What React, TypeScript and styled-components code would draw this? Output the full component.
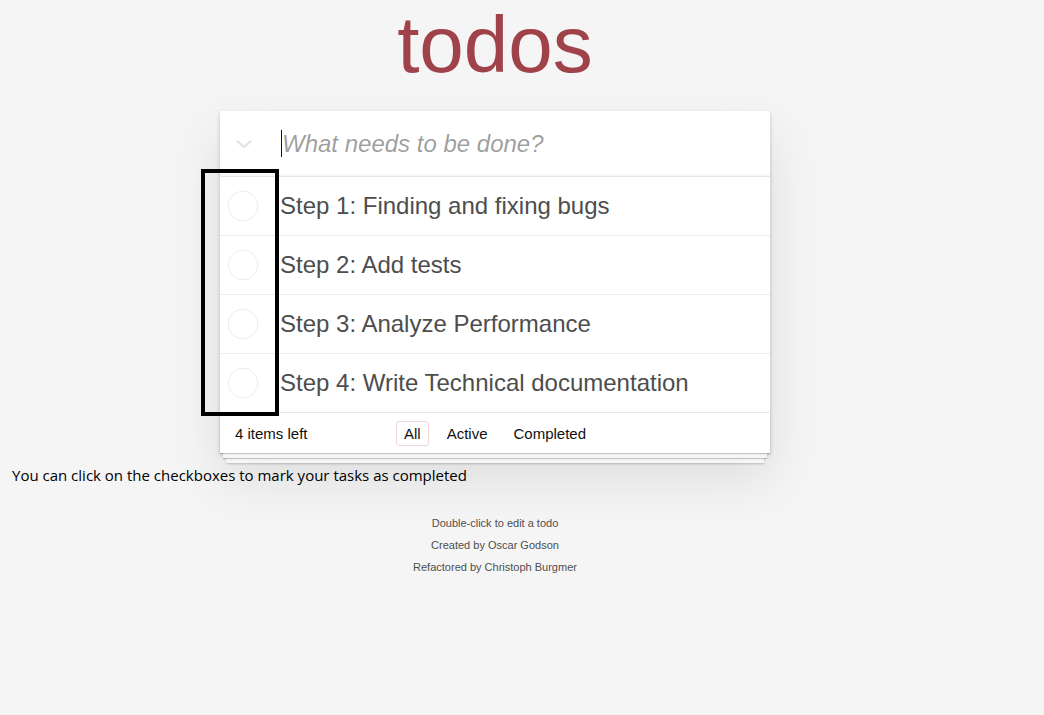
import React from "react";
import styled, { createGlobalStyle } from "styled-components";

const GlobalStyle = createGlobalStyle`
  html, body {
    margin: 0;
    padding: 0;
  }
  body {
    background: #f5f5f5;
    font-family: "Liberation Sans", Arial, Helvetica, sans-serif;
    color: #111;
    -webkit-font-smoothing: antialiased;
  }
`;

// Page shell
const Page = styled.div`
  width: 990px;
  padding-bottom: 40px;
`;

const Title = styled.h1`
  margin: 0;
  height: 90px;
  line-height: 90px;
  font-size: 80px;
  font-weight: 400;
  text-align: center;
  color: #a0424a;
  text-rendering: optimizeLegibility;
`;

const TodoApp = styled.section`
  position: relative;
  width: 550px;
  margin: 21px auto 0;
  background: #fff;
  box-shadow: 0 2px 4px 0 rgba(0, 0, 0, 0.2), 0 25px 50px 0 rgba(0, 0, 0, 0.1);
`;

// New todo row
const NewTodoRow = styled.header`
  display: flex;
  align-items: center;
  height: 65px;
  border-bottom: 1px solid #e6e6e6;
  box-shadow: inset 0 -2px 1px rgba(0, 0, 0, 0.03);
`;

const ToggleAll = styled.div`
  width: 48px;
  height: 100%;
  display: flex;
  align-items: center;
  justify-content: center;
`;

const InputWrap = styled.div`
  position: relative;
  flex: 1;
  padding-left: 12px;
`;

const NewTodoInput = styled.input`
  width: 100%;
  box-sizing: border-box;
  border: none;
  outline: none;
  padding: 0 0 0 2px;
  margin: 0;
  background: transparent;
  font-family: "Liberation Sans", Arial, sans-serif;
  font-size: 24px;
  line-height: 34px;
  color: #4d4d4d;

  &::placeholder {
    font-style: italic;
    color: rgba(0, 0, 0, 0.4);
  }
`;

const Caret = styled.span`
  position: absolute;
  left: 13px;
  top: 3px;
  width: 1px;
  height: 27px;
  background: #111;
`;

// Items
const TodoList = styled.ul`
  list-style: none;
  margin: 0;
  padding: 0;
`;

const TodoItem = styled.li`
  display: flex;
  align-items: center;
  height: 58px;
  border-bottom: 1px solid #ededed;

  &:last-child {
    border-bottom: none;
  }
`;

const Toggle = styled.div`
  width: 46px;
  display: flex;
  justify-content: center;
  margin-right: 14px;
`;

const Label = styled.label`
  font-size: 24px;
  line-height: 1.2;
  color: #4d4d4d;
  white-space: nowrap;
`;

// Footer
const Footer = styled.footer`
  display: grid;
  grid-template-columns: 1fr auto 1fr;
  align-items: center;
  height: 40px;
  padding: 0 15px;
  border-top: 1px solid #e6e6e6;
  font-size: 15px;
  color: #111;
  box-shadow: 0 1px 1px rgba(0, 0, 0, 0.2), 0 8px 0 -3px #f6f6f6,
    0 9px 1px -3px rgba(0, 0, 0, 0.2), 0 16px 0 -6px #f6f6f6,
    0 17px 2px -6px rgba(0, 0, 0, 0.2);
`;

const Count = styled.span`
  justify-self: start;
`;

const Filters = styled.ul`
  display: flex;
  gap: 10px;
  list-style: none;
  margin: 0;
  padding: 0;
`;

const FilterLink = styled.a<{ $selected?: boolean }>`
  display: block;
  padding: 3px 7px;
  border: 1px solid ${({ $selected }) => ($selected ? "rgba(175, 47, 47, 0.2)" : "transparent")};
  border-radius: 3px;
  line-height: 17px;
  color: inherit;
  text-decoration: none;
`;

// Tour highlight over the checkboxes
const Highlight = styled.div`
  position: absolute;
  left: -19px;
  top: 58px;
  width: 78px;
  height: 247px;
  box-sizing: border-box;
  border: 4px solid #000;
  pointer-events: none;
`;

const TourText = styled.p`
  margin: 13px 0 0;
  padding-left: 12px;
  font-family: "Open Sans", "Noto Sans", sans-serif;
  font-size: 15px;
  line-height: 19px;
  color: #000;
`;

const Info = styled.footer`
  display: flex;
  flex-direction: column;
  align-items: center;
  gap: 11px;
  margin-top: 33px;
  font-size: 11px;
  line-height: 1;
  color: #4d4d4d;
  text-shadow: 0 1px 0 rgba(255, 255, 255, 0.5);

  p {
    margin: 0;
  }
`;

const Chevron = () => (
  <svg width="18" height="10" viewBox="0 0 18 10">
    <polyline points="2,2 9,8 16,2" fill="none" stroke="#e3e3e3" strokeWidth="2.4" />
  </svg>
);

const Circle = () => (
  <svg width="32" height="32" viewBox="0 0 32 32">
    <circle cx="16" cy="16" r="14.8" fill="none" stroke="#ececec" strokeWidth="1" />
  </svg>
);

const todos = [
  "Step 1: Finding and fixing bugs",
  "Step 2: Add tests",
  "Step 3: Analyze Performance",
  "Step 4: Write Technical documentation",
];

const App: React.FC = () => {
  return (
    <>
      <GlobalStyle />
      <Page>
        <Title>todos</Title>
        <TodoApp>
          <NewTodoRow>
            <ToggleAll>
              <Chevron />
            </ToggleAll>
            <InputWrap>
              <NewTodoInput placeholder="What needs to be done?" readOnly />
              <Caret />
            </InputWrap>
          </NewTodoRow>
          <TodoList>
            {todos.map((t) => (
              <TodoItem key={t}>
                <Toggle>
                  <Circle />
                </Toggle>
                <Label>{t}</Label>
              </TodoItem>
            ))}
          </TodoList>
          <Footer>
            <Count>4 items left</Count>
            <Filters>
              <li>
                <FilterLink $selected>All</FilterLink>
              </li>
              <li>
                <FilterLink>Active</FilterLink>
              </li>
              <li>
                <FilterLink>Completed</FilterLink>
              </li>
            </Filters>
            <span />
          </Footer>
          <Highlight />
        </TodoApp>
        <TourText>You can click on the checkboxes to mark your tasks as completed</TourText>
        <Info>
          <p>Double-click to edit a todo</p>
          <p>Created by Oscar Godson</p>
          <p>Refactored by Christoph Burgmer</p>
        </Info>
      </Page>
    </>
  );
};

export default App;
